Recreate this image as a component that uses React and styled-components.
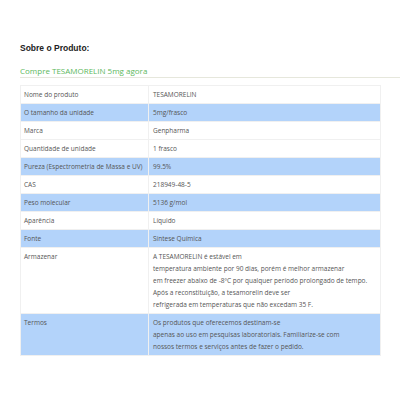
import React from 'react';
import styled, { createGlobalStyle } from 'styled-components';

const GlobalStyle = createGlobalStyle`
  body {
    margin: 0;
    background: #ffffff;
  }
`;

const rows = [
  { label: 'Nome do produto', value: ['TESAMORELIN'] },
  { label: 'O tamanho da unidade', value: ['5mg/frasco'], blue: true },
  { label: 'Marca', value: ['Genpharma'] },
  { label: 'Quantidade de unidade', value: ['1 frasco'] },
  { label: 'Pureza (Espectrometria de Massa e UV)', value: ['99.5%'], blue: true },
  { label: 'CAS', value: ['218949-48-5'] },
  { label: 'Peso molecular', value: ['5136 g/mol'], blue: true },
  { label: 'Aparência', value: ['Líquido'] },
  { label: 'Fonte', value: ['Síntese Química'], blue: true },
  {
    label: 'Armazenar',
    value: [
      'A TESAMORELIN é estável em',
      'temperatura ambiente por 90 dias, porém é melhor armazenar',
      'em freezer abaixo de -8ºC por qualquer período prolongado de tempo.',
      'Após a reconstituição, a tesamorelin deve ser',
      'refrigerada em temperaturas que não excedam 35 F.',
    ],
  },
  {
    label: 'Termos',
    value: [
      'Os produtos que oferecemos destinam-se',
      'apenas ao uso em pesquisas laboratoriais. Familiarize-se com',
      'nossos termos e serviços antes de fazer o pedido.',
    ],
    blue: true,
  },
];

const App = () => {
  return (
    <Page>
      <GlobalStyle />
      <Title>Sobre o Produto:</Title>
      <BuyLine>
        <BuyLink href="#">Compre TESAMORELIN 5mg agora</BuyLink>
      </BuyLine>
      <SpecTable>
        <colgroup>
          <LabelCol />
          <col />
        </colgroup>
        <tbody>
          {rows.map(row => (
            <Row key={row.label} $blue={row.blue}>
              <Label>{row.label}</Label>
              <Value>
                {row.value.map((line, i) => (
                  <Line key={i}>{line}</Line>
                ))}
              </Value>
            </Row>
          ))}
        </tbody>
      </SpecTable>
    </Page>
  );
};

export default App;

const Page = styled.div`
  width: 400px;
  height: 400px;
  padding: 43px 0 0 20px;
  box-sizing: border-box;
  font-family: 'Open Sans', 'Liberation Sans', sans-serif;
`;

const Title = styled.div`
  font-family: 'Liberation Sans', Arial, sans-serif;
  font-weight: bold;
  font-size: 8.5px;
  line-height: 11px;
  color: #222222;
`;

const BuyLine = styled.div`
  margin-top: 11px;
  padding-bottom: 1px;
  font-size: 8px;
  line-height: 11px;
  border-bottom: 1px solid #e6e7dc;
`;

const BuyLink = styled.a`
  color: #5cb85c;
  text-decoration: none;
`;

const SpecTable = styled.table`
  width: 361px;
  margin-top: 7px;
  table-layout: fixed;
  border-collapse: collapse;
  border: 1px solid #f0f0f0;
  font-size: 6.5px;
  color: #555555;
`;

const LabelCol = styled.col`
  width: 128px;
`;

const Row = styled.tr`
  background: ${props => (props.$blue ? '#b3d3fa' : '#ffffff')};
  border-bottom: 1px solid #f0f0f0;
`;

const Label = styled.td`
  padding: 3px 2px 2px 3px;
  vertical-align: top;
  line-height: 12px;
  white-space: nowrap;
  border-right: 1px solid #f0f0f0;
`;

const Value = styled.td`
  padding: 3px 4px 2px;
  vertical-align: top;
  line-height: 12px;
`;

const Line = styled.div`
  white-space: nowrap;
`;
